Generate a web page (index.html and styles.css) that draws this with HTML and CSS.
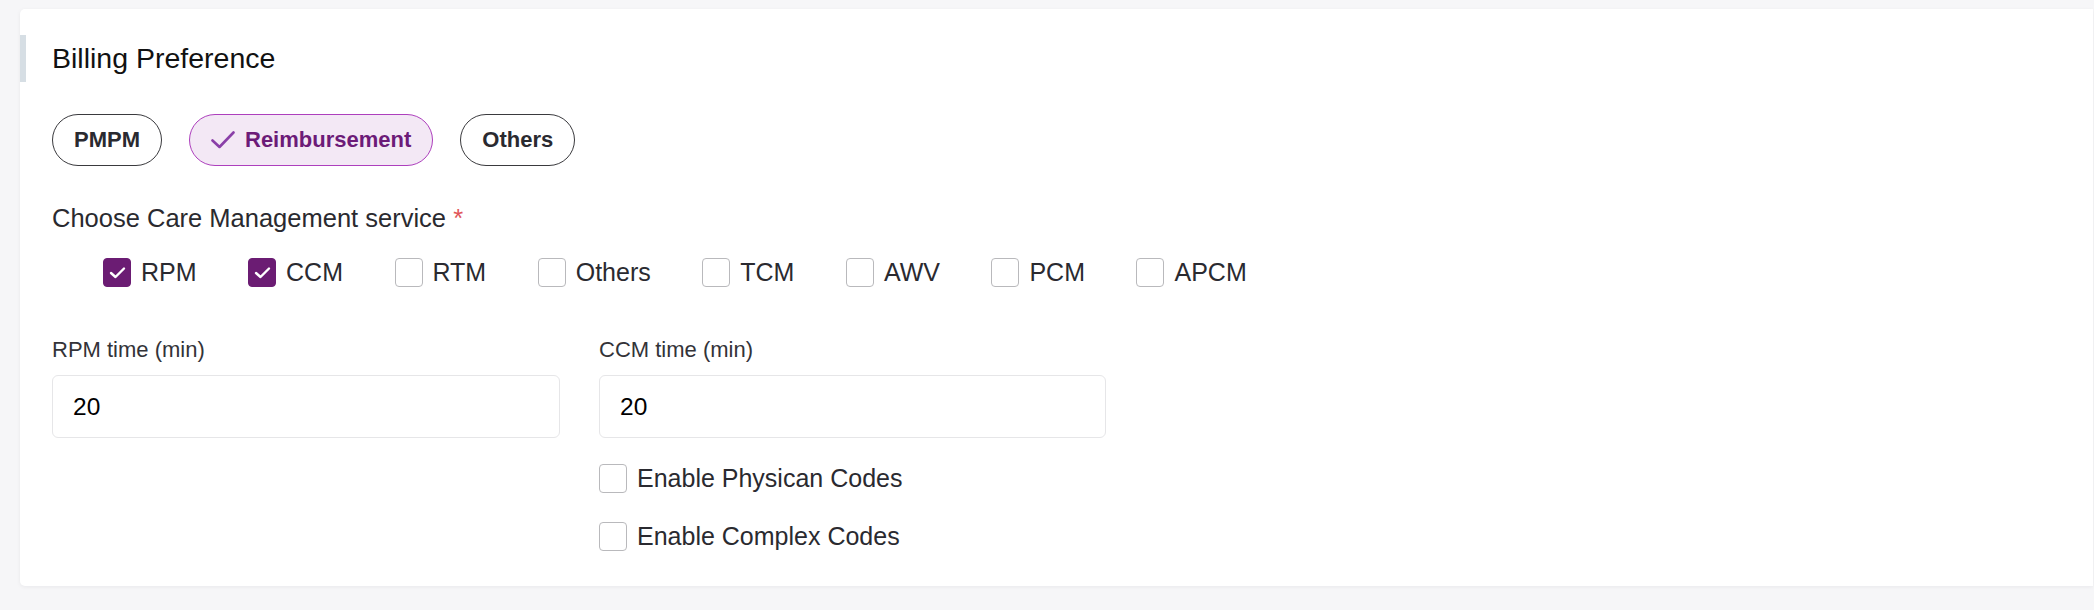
FILE: index.html
```html
<!DOCTYPE html>
<html lang="en">
<head>
<meta charset="utf-8">
<title>Billing Preference</title>
<link rel="stylesheet" href="styles.css">
</head>
<body>
<div class="card">
  <div class="section-header"><h2 class="title">Billing Preference</h2></div>
  <div class="body">
    <div class="chips">
      <button class="chip">PMPM</button>
      <button class="chip chip-selected">
        <svg class="chip-check" width="24" height="18" viewBox="0 0 24 18"><path d="M1.5 9.5 L8.5 16 L22.5 1.5" fill="none" stroke="#8a3fa8" stroke-width="2.6" stroke-linecap="round" stroke-linejoin="round"/></svg>
        <span>Reimbursement</span>
      </button>
      <button class="chip">Others</button>
    </div>

    <div class="field-label">Choose Care Management service <span class="req">*</span></div>

    <div class="checks">
      <label class="check"><span class="box box-on"><svg width="17" height="13" viewBox="0 0 17 13"><path d="M2 7 L6.5 11 L15 2.5" fill="none" stroke="#fff" stroke-width="2.4" stroke-linecap="round" stroke-linejoin="round"/></svg></span><span class="check-text">RPM</span></label>
      <label class="check"><span class="box box-on"><svg width="17" height="13" viewBox="0 0 17 13"><path d="M2 7 L6.5 11 L15 2.5" fill="none" stroke="#fff" stroke-width="2.4" stroke-linecap="round" stroke-linejoin="round"/></svg></span><span class="check-text">CCM</span></label>
      <label class="check"><span class="box"></span><span class="check-text">RTM</span></label>
      <label class="check"><span class="box"></span><span class="check-text">Others</span></label>
      <label class="check"><span class="box"></span><span class="check-text">TCM</span></label>
      <label class="check"><span class="box"></span><span class="check-text">AWV</span></label>
      <label class="check"><span class="box"></span><span class="check-text">PCM</span></label>
      <label class="check"><span class="box"></span><span class="check-text">APCM</span></label>
    </div>

    <div class="inputs">
      <div class="col">
        <div class="input-label">RPM time (min)</div>
        <div class="input">20</div>
      </div>
      <div class="col">
        <div class="input-label">CCM time (min)</div>
        <div class="input">20</div>
        <div class="extra-checks">
          <label class="check"><span class="box"></span><span class="check-text">Enable Physican Codes</span></label>
          <label class="check"><span class="box"></span><span class="check-text">Enable Complex Codes</span></label>
        </div>
      </div>
    </div>
  </div>
</div>
</body>
</html>
```

FILE: styles.css
```css
* { box-sizing: border-box; }

html, body {
  margin: 0;
  padding: 0;
  background: #f6f6f8;
  font-family: "Liberation Sans", Arial, Helvetica, sans-serif;
  color: #2a2a2f;
}

body {
  height: 610px;
  overflow: hidden;
  padding-top: 9px;
}

.card {
  margin: 0 1px 0 20px;
  background: #ffffff;
  border-radius: 5px 0 0 5px;
  box-shadow: 0 1px 4px rgba(20, 20, 40, 0.06);
  padding: 26px 0 35px 0;
}

.section-header {
  height: 47px;
  border-left: 6px solid #d6dee4;
  padding-left: 26px;
  display: flex;
  align-items: center;
}

.title {
  margin: 0;
  font-size: 28.5px;
  font-weight: 400;
  color: #111111;
}

.body {
  padding-left: 32px;
}

.chips {
  margin-top: 32px;
  display: flex;
  gap: 27px;
}

.chip {
  height: 52px;
  padding: 0 21px;
  border: 1px solid #3a3a3e;
  border-radius: 26px;
  background: #ffffff;
  display: inline-flex;
  align-items: center;
  gap: 10px;
  font-family: "Liberation Sans", Arial, sans-serif;
  font-size: 22px;
  font-weight: 700;
  color: #2a2a30;
  cursor: pointer;
}

.chip-selected {
  background: #f3e8f5;
  border-color: #ad3fbd;
  color: #6c1b78;
}

.chip-check { display: block; }

.field-label {
  margin-top: 38px;
  font-size: 25.5px;
  color: #2a2a2f;
}

.req {
  color: #e0565a;
}

.checks {
  margin-top: 25px;
  padding-left: 51px;
  display: flex;
  gap: 51.5px;
}

.check {
  display: flex;
  align-items: center;
  gap: 10px;
  height: 29px;
}

.box {
  width: 28px;
  height: 29px;
  border: 1px solid #b9b9bc;
  border-radius: 4px;
  background: #ffffff;
  display: flex;
  align-items: center;
  justify-content: center;
  flex: none;
}

.box-on {
  background: #6b1c73;
  border-color: #6b1c73;
}

.check-text {
  font-size: 25px;
  color: #2a2a30;
  line-height: 29px;
}

.inputs {
  margin-top: 50px;
  display: grid;
  grid-template-columns: 508px 507px;
  column-gap: 39px;
  align-items: start;
}

.input-label {
  font-size: 22px;
  color: #333338;
  margin-bottom: 12px;
}

.input {
  height: 63px;
  border: 1px solid #e6e6e8;
  border-radius: 6px;
  padding-left: 20px;
  display: flex;
  align-items: center;
  font-size: 24.5px;
  color: #000000;
}

.extra-checks {
  margin-top: 26px;
  display: flex;
  flex-direction: column;
  gap: 29px;
}
```
